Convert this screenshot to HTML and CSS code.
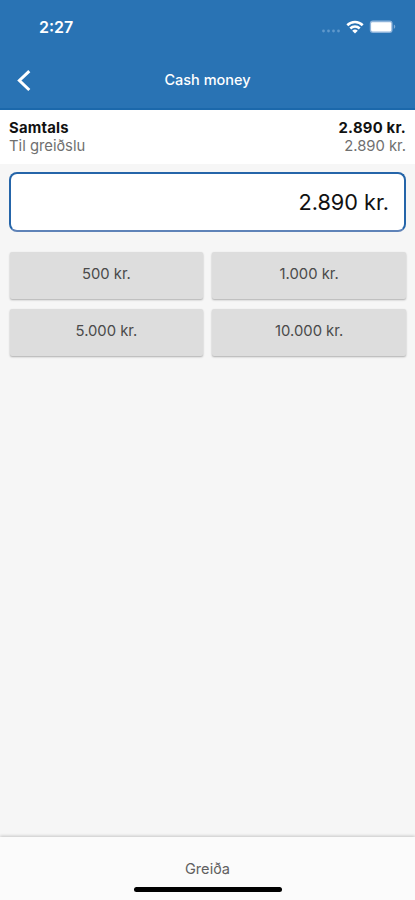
FILE: index.html
```
<!DOCTYPE html>
<html lang="is">
<head>
    <meta charset="UTF-8">
    <meta name="viewport" content="width=device-width, initial-scale=1.0">
    <title>Cash money</title>
    <link rel="stylesheet" href="styles.css">
</head>
<body>
    <div class="screen">
        <header class="header">
            <div class="status-bar">
                <span class="time">2:27</span>
                <div class="status-icons">
                    <svg class="signal" width="20" height="4" viewBox="0 0 20 4">
                        <circle cx="2.5" cy="2" r="1.4"/>
                        <circle cx="7.5" cy="2" r="1.4"/>
                        <circle cx="12.5" cy="2" r="1.4"/>
                        <circle cx="17.5" cy="2" r="1.4"/>
                    </svg>
                    <svg class="wifi" width="18" height="14" viewBox="0 0 18 14">
                        <path d="M1.3 5.2a11 11 0 0 1 15.4 0M4.3 8.5a6.7 6.7 0 0 1 9.4 0" fill="none" stroke="#fff" stroke-width="2.6"/>
                        <path d="M9 13.6L6.2 10.8a4 4 0 0 1 5.6 0z" fill="#fff"/>
                    </svg>
                    <svg class="battery" width="28" height="14" viewBox="0 0 28 14">
                        <rect x="0.8" y="0.6" width="22.8" height="12.4" rx="3.2" fill="#8db3da"/>
                        <rect x="2.1" y="2.2" width="20.2" height="9.2" rx="1.4" fill="#fff"/>
                        <path d="M24.8 4.6v4.4a2.4 2.4 0 0 0 0-4.4z" fill="#7eabd6"/>
                    </svg>
                </div>
            </div>
            <nav class="nav-bar">
                <button class="back" aria-label="Back">
                    <svg width="14" height="22" viewBox="0 0 14 22">
                        <path d="M12.3 1.2L2.4 10.5l9.9 9.5" fill="none" stroke="#fff" stroke-width="3"/>
                    </svg>
                </button>
                <h1>Cash money</h1>
            </nav>
        </header>

        <section class="summary">
            <div class="row total">
                <span>Samtals</span>
                <span>2.890 kr.</span>
            </div>
            <div class="row due">
                <span>Til greiðslu</span>
                <span>2.890 kr.</span>
            </div>
        </section>

        <main class="content">
            <div class="amount">2.890 kr.</div>
            <div class="quick-amounts">
                <button>500 kr.</button>
                <button>1.000 kr.</button>
                <button>5.000 kr.</button>
                <button>10.000 kr.</button>
            </div>
        </main>

        <footer class="footer">
            <button class="pay">Greiða</button>
            <div class="home-indicator"></div>
        </footer>
    </div>
</body>
</html>
```

FILE: styles.css
```
* {
    box-sizing: border-box;
}

body {
    margin: 0;
    font-family: Inter, "Liberation Sans", sans-serif;
    color: #111;
}

button {
    border: none;
    padding: 0;
    background: none;
    font-family: inherit;
}

svg {
    display: block;
}

.screen {
    display: flex;
    flex-direction: column;
    height: 900px;
    background: #f6f6f6;
}

/* Header */
.header {
    height: 110px;
    background: #2973b4;
    border-bottom: 2px solid #1b68ab;
    color: white;
}

.status-bar {
    display: flex;
    justify-content: space-between;
    align-items: center;
    height: 54px;
    padding: 0 18px 0 39px;
}

.time {
    font-size: 16px;
    font-weight: 600;
}

.status-icons {
    display: flex;
    align-items: center;
}

.signal {
    margin: 8px 5px 0 0;
    fill: #5f98cb;
}

.wifi {
    margin-right: 5px;
}

.nav-bar {
    display: grid;
    grid-template-columns: 48px 1fr 48px;
    align-items: center;
    height: 53px;
}

.back {
    padding-left: 17px;
}

h1 {
    margin: 0;
    padding-bottom: 2px;
    text-align: center;
    font-size: 14.5px;
    font-weight: 500;
}

/* Totals */
.summary {
    height: 54px;
    padding: 9px 9px 0;
    background: white;
    font-size: 14.8px;
    line-height: 18px;
}

.row {
    display: flex;
    justify-content: space-between;
}

.total {
    font-weight: 700;
    letter-spacing: 0.25px;
}

.due {
    color: #707070;
}

/* Amount and quick buttons */
.content {
    flex: 1;
    padding: 8px 9px 0;
}

.amount {
    height: 60px;
    padding-right: 15px;
    border: 2px solid #2565a9;
    border-bottom-color: #5f83b8;
    border-radius: 8px;
    background: white;
    font-size: 21.7px;
    line-height: 57px;
    text-align: right;
}

.quick-amounts {
    display: grid;
    grid-template-columns: 1fr 1fr;
    gap: 10px 9px;
    margin: 20px 0 0 0.5px;
}

.quick-amounts button {
    height: 47px;
    padding-bottom: 4px;
    border-radius: 2px;
    background: #ddd;
    box-shadow: 0 1px 2px rgba(0, 0, 0, 0.3);
    color: #4a4a4a;
    font-size: 14.8px;
}

/* Footer */
.footer {
    display: flex;
    flex-direction: column;
    align-items: center;
    height: 63px;
    background: #fbfbfb;
    box-shadow: 0 -1px 3px rgba(0, 0, 0, 0.2);
}

.pay {
    width: 100%;
    height: 50px;
    padding-top: 13px;
    color: #606060;
    font-size: 14.6px;
}

.home-indicator {
    width: 148px;
    height: 5px;
    border-radius: 3px;
    background: black;
}
```
